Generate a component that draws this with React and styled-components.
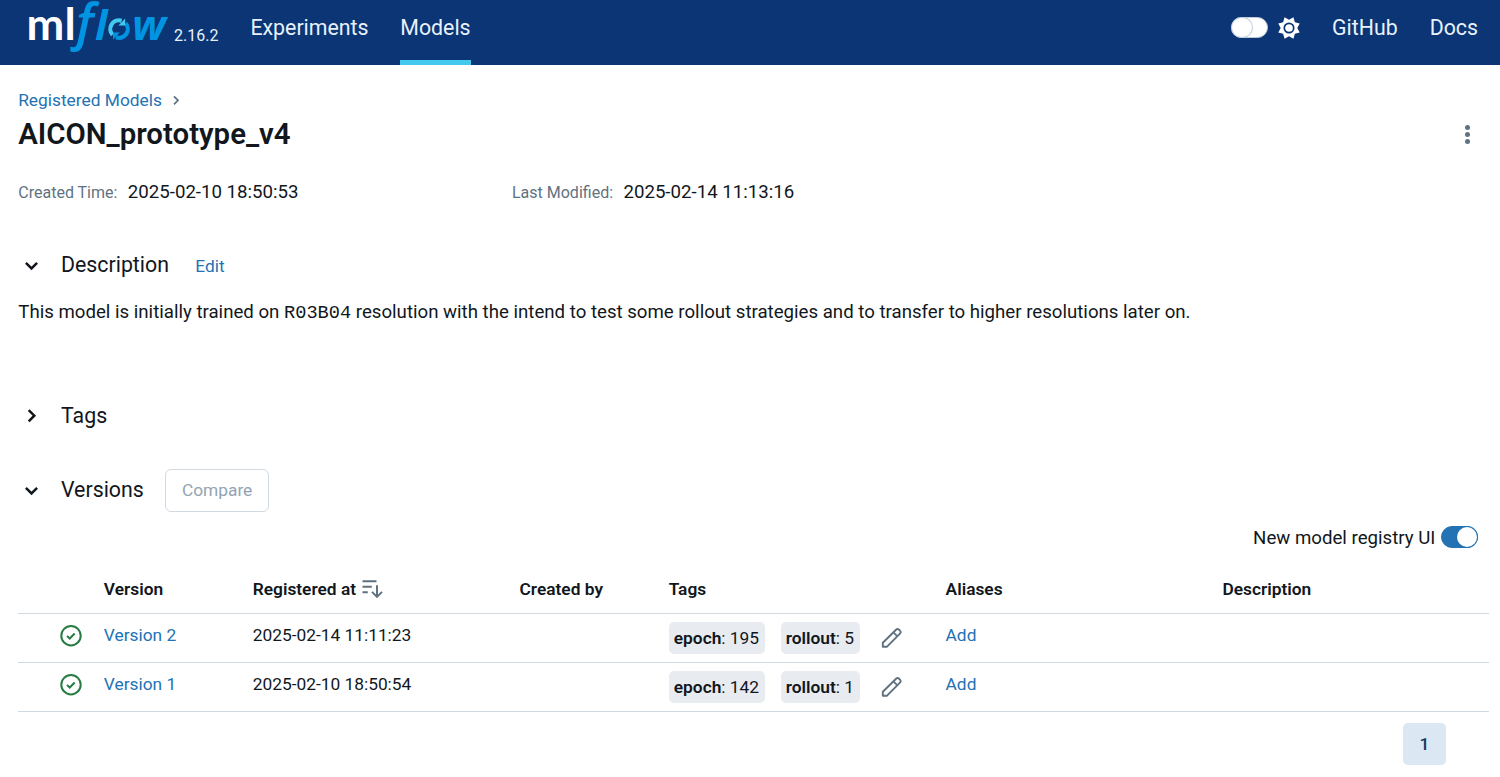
import React from "react";
import styled, { createGlobalStyle } from "styled-components";

const GlobalStyle = createGlobalStyle`
  *, *::before, *::after { box-sizing: border-box; }
  body {
    margin: 0;
    background: #fff;
    color: #11171c;
    font-family: Roboto, "Liberation Sans", sans-serif;
    font-size: 17.33px;
    line-height: 26px;
    overflow: hidden;
  }
  svg { display: block; flex: none; overflow: visible; }
`;

const Header = styled.header`
  display: flex;
  align-items: flex-start;
  height: 65px;
  padding: 0 22px 0 28px;
  background: #0b3574;
`;

const LogoLink = styled.a`
  display: flex;
  width: 140px;
  height: 54px;
`;

const ReleaseTag = styled.span`
  width: 82.4px;
  padding: 23px 0 0 6px;
  color: #e7f1fb;
  font-size: 16px;
`;

const NavLink = styled.a`
  height: 65px;
  padding-top: 15px;
  margin-right: ${(p) => p.$gap || 0}px;
  border-bottom: 5px solid ${(p) => (p.$active ? "#43c9ed" : "transparent")};
  color: #e7f1fb;
  font-size: 21.33px;
  line-height: 26px;
`;

const HeaderRight = styled.div`
  display: flex;
  align-items: flex-start;
  margin-left: auto;
`;

const ThemeSwitch = styled.div`
  display: flex;
  align-items: center;
  gap: 10.5px;
  height: 55px;
  margin-right: 31.9px;
`;

const Track = styled.span`
  display: flex;
  justify-content: ${(p) => (p.$on ? "flex-end" : "flex-start")};
  width: 37px;
  height: ${(p) => (p.$on ? 22 : 21)}px;
  border: 1px solid ${(p) => (p.$on ? "#2272b4" : "#c0cdd8")};
  border-radius: 11px;
  background: ${(p) => (p.$on ? "#2272b4" : "#fff")};
`;

const Knob = styled.span`
  width: 20px;
  height: 100%;
  border-radius: 10px;
  background: #fff;
  box-shadow: 0 0 0 1px ${(p) => (p.$on ? "#2272b4" : "#c0cdd8")};
`;

const Page = styled.main`
  padding: 22px 11px 0 18px;
`;

const Link = styled.a`
  color: #2272b4;
`;

const EditLink = styled(Link)`
  padding-top: 2px;
`;

const Breadcrumb = styled.nav`
  display: flex;
  align-items: center;
  gap: 7px;
  height: 26px;
  padding-left: 0.2px;
`;

const TitleRow = styled.div`
  display: flex;
  align-items: center;
  justify-content: space-between;
  height: 42px;
  padding: 0 11px 0 0.2px;
`;

const Title = styled.h1`
  margin: 0;
  font-size: 29.4px;
  line-height: 42px;
  font-weight: 600;
`;

const MetaRow = styled.dl`
  display: grid;
  grid-template-columns: 493.7px auto;
  margin: 24px 0 0;
  height: 26px;
  padding-left: 0.3px;
`;

const MetaItem = styled.div`
  display: flex;
  align-items: baseline;
  gap: 10.4px;
`;

const MetaLabel = styled.dt`
  color: #5f7281;
  font-size: 16px;
`;

const MetaValue = styled.dd`
  margin: 0;
  font-size: 18.67px;
`;

const SectionHead = styled.div`
  display: flex;
  align-items: center;
  height: 42px;
  margin-top: ${(p) => p.$top}px;
  padding-left: 5px;
`;

const SectionTitle = styled.h2`
  margin: 0 ${(p) => p.$gap || 0}px 0 12px;
  font-size: 21.33px;
  line-height: 42px;
  font-weight: 400;
`;

const Paragraph = styled.p`
  margin: 13px 0 0;
  font-size: 18.65px;
  line-height: 26px;
  white-space: nowrap;
  padding-left: 0.3px;
`;

const Code = styled.code`
  font-family: "Liberation Mono", monospace;
  font-size: 18.67px;
`;

const CompareButton = styled.button`
  width: 104px;
  height: 43px;
  padding: 0;
  border: 1px solid #d1d9e1;
  border-radius: 6px;
  background: #fff;
  color: #92a4b3;
  font: inherit;
`;

const ToggleRow = styled.div`
  display: flex;
  align-items: center;
  justify-content: flex-end;
  gap: 5.6px;
  height: 26px;
  margin-top: 13px;
  padding-right: 11px;
  font-size: 18.67px;
`;

const ToggleLabel = styled.span`
  padding-top: 2px;
`;

const Row = styled.div`
  display: grid;
  grid-template-columns: 85.8px 148.9px 266.8px 149.2px 276.9px 276.9px 1fr;
  height: 49px;
  padding-top: ${(p) => (p.$head ? 11 : 8)}px;
  border-bottom: 1px solid #d1d9e1;
  font-weight: ${(p) => (p.$head ? 600 : 400)};
`;

const Table = styled.div`
  margin-top: 15px;
`;

const Cell = styled.div`
  display: flex;
  align-items: flex-start;
  gap: 6px;
  white-space: nowrap;
`;

const StatusCell = styled(Cell)`
  padding: 3px 0 0 42.4px;
`;

const TagList = styled(Cell)`
  gap: 0;
`;

const Tag = styled.span`
  height: 32px;
  margin-right: 16px;
  padding: 3px 5.5px 3px 5.1px;
  border-radius: 5px;
  background: #e8ebf0;

  b { font-weight: 600; }
`;

const EditIcon = styled.span`
  padding: 5px 0 0 5.4px;
`;

const Pagination = styled.div`
  display: flex;
  justify-content: flex-end;
  padding: 11px 43px 0 0;
`;

const PageButton = styled.span`
  width: 43px;
  height: 42px;
  border-radius: 5px;
  background: #dbe7f2;
  color: #0e3a5e;
  line-height: 43px;
  font-weight: 500;
  text-align: center;
`;

function Logo() {
  return (
    <svg width="140" height="54" viewBox="28 0 140 54" fontFamily="Lato, sans-serif">
      <text x="26.6" y="40" fontSize="43" fontWeight="700" fill="#fff" textLength="49" lengthAdjust="spacingAndGlyphs">ml</text>
      <g fill="#0194e2" fontFamily="'Open Sans', sans-serif" fontStyle="italic" fontWeight="700">
        <text x="76" y="40" fontSize="51" fontWeight="600">f</text>
        <text x="95" y="40" fontSize="42">l</text>
        <text x="132" y="40" fontSize="41" textLength="34" lengthAdjust="spacingAndGlyphs">w</text>
      </g>
      <g fill="none" strokeWidth="4.2">
        <path d="M112.6 34.9A8.7 8.7 0 0 1 121.6 20.7" stroke="#43c9ed" />
        <path d="M125.6 23.3A8.7 8.7 0 0 1 116 37.2" stroke="#0194e2" />
      </g>
      <path d="M125.2 18.6v6.8h-6.8z" fill="#43c9ed" />
      <path d="M113 39.4v-6.8h6.8z" fill="#0194e2" />
    </svg>
  );
}

function Sun() {
  const teeth = Array.from({ length: 16 }, (_, i) => {
    const r = i % 2 ? 8.3 : 11.6;
    const a = (i * Math.PI) / 8 + Math.PI / 8;
    return `${11 + r * Math.sin(a)},${11 - r * Math.cos(a)}`;
  }).join(" ");
  return (
    <svg width="22" height="22" viewBox="0 0 22 22">
      <polygon points={teeth} fill="#fff" />
      <circle cx="11" cy="11" r="4.7" fill="none" stroke="#0b3574" strokeWidth="1.7" />
    </svg>
  );
}

function Chevron({ down }) {
  return (
    <svg width="26" height="26" viewBox="0 0 26 26" fill="none" stroke="#11171c" strokeWidth="2.5">
      <path d={down ? "M2.9 10.8l5.6 5.6 5.6-5.6" : "M5.7 7.1l5.6 5.6-5.6 5.6"} />
    </svg>
  );
}

const SmallChevron = () => (
  <svg width="14" height="14" viewBox="0 0 14 14" fill="none" stroke="#5f7281" strokeWidth="1.7">
    <path d="M5 3.3l4 4-4 4" />
  </svg>
);

const Kebab = () => (
  <svg width="21" height="22" viewBox="0 0 21 22" fill="#5f7281">
    <circle cx="10.5" cy="4.5" r="2.5" />
    <circle cx="10.5" cy="11.5" r="2.5" />
    <circle cx="10.5" cy="18.5" r="2.5" />
  </svg>
);

const Sort = () => (
  <svg width="21" height="26" viewBox="0 0 21 26" fill="none" stroke="#5f7281" strokeWidth="2">
    <path d="M0.5 5.3h14M0.5 10.7h9.3M0.5 16.2h5.3M15 9.3v12M10 15.9l5 5 5-5" />
  </svg>
);

const Check = () => (
  <svg width="22" height="22" viewBox="0 0 22 22" fill="none" stroke="#277c43" strokeWidth="2">
    <circle cx="11" cy="10.7" r="9.7" />
    <path d="M7 10.9l2.7 2.6 5-5" />
  </svg>
);

const Pencil = () => (
  <svg width="22" height="22" viewBox="0 0 22 22" fill="none" stroke="#5f7281" strokeWidth="1.9" strokeLinejoin="round">
    <path d="M1.8 19.8v-4L15.3 2.5a1.8 1.8 0 0 1 2.5 0l1.4 1.4a1.8 1.8 0 0 1 0 2.5L5.8 19.8z" />
    <path d="M12.4 5.3l4 4" />
  </svg>
);

const versions = [
  { name: "Version 2", date: "2025-02-14 11:11:23", epoch: 195, rollout: 5 },
  { name: "Version 1", date: "2025-02-10 18:50:54", epoch: 142, rollout: 1 },
];

export default function App() {
  return (
    <>
      <GlobalStyle />
      <Header>
        <LogoLink><Logo /></LogoLink>
        <ReleaseTag>2.16.2</ReleaseTag>
        <NavLink $gap={31.7}>Experiments</NavLink>
        <NavLink $active>Models</NavLink>
        <HeaderRight>
          <ThemeSwitch>
            <Track><Knob /></Track>
            <Sun />
          </ThemeSwitch>
          <NavLink $gap={32}>GitHub</NavLink>
          <NavLink>Docs</NavLink>
        </HeaderRight>
      </Header>
      <Page>
        <Breadcrumb>
          <Link>Registered Models</Link>
          <SmallChevron />
        </Breadcrumb>
        <TitleRow>
          <Title>AICON_prototype_v4</Title>
          <Kebab />
        </TitleRow>
        <MetaRow>
          <MetaItem>
            <MetaLabel>Created Time:</MetaLabel>
            <MetaValue>2025-02-10 18:50:53</MetaValue>
          </MetaItem>
          <MetaItem>
            <MetaLabel>Last Modified:</MetaLabel>
            <MetaValue>2025-02-14 11:13:16</MetaValue>
          </MetaItem>
        </MetaRow>
        <SectionHead $top={39}>
          <Chevron down />
          <SectionTitle $gap={26.3}>Description</SectionTitle>
          <EditLink>Edit</EditLink>
        </SectionHead>
        <Paragraph>
          This model is initially trained on <Code>R03B04</Code> resolution with the intend to test some rollout strategies and to transfer to higher resolutions later on.
        </Paragraph>
        <SectionHead $top={69}>
          <Chevron />
          <SectionTitle>Tags</SectionTitle>
        </SectionHead>
        <SectionHead $top={32}>
          <Chevron down />
          <SectionTitle $gap={21.3}>Versions</SectionTitle>
          <CompareButton disabled>Compare</CompareButton>
        </SectionHead>
        <ToggleRow>
          <ToggleLabel>New model registry UI</ToggleLabel>
          <Track $on><Knob $on /></Track>
        </ToggleRow>
        <Table>
          <Row $head>
            <Cell />
            <Cell>Version</Cell>
            <Cell>Registered at <Sort /></Cell>
            <Cell>Created by</Cell>
            <Cell>Tags</Cell>
            <Cell>Aliases</Cell>
            <Cell>Description</Cell>
          </Row>
          {versions.map((v) => (
            <Row key={v.name}>
              <StatusCell><Check /></StatusCell>
              <Cell><Link>{v.name}</Link></Cell>
              <Cell>{v.date}</Cell>
              <Cell />
              <TagList>
                <Tag><b>epoch</b>: {v.epoch}</Tag>
                <Tag><b>rollout</b>: {v.rollout}</Tag>
                <EditIcon><Pencil /></EditIcon>
              </TagList>
              <Cell><Link>Add</Link></Cell>
              <Cell />
            </Row>
          ))}
        </Table>
        <Pagination><PageButton>1</PageButton></Pagination>
      </Page>
    </>
  );
}
